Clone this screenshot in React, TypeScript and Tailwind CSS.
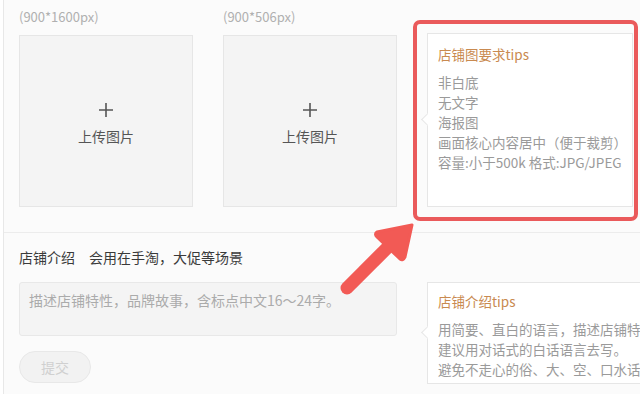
const font = { fontFamily: '"Noto Sans CJK SC", "Noto Sans", sans-serif' };

function UploadBox({ size }: { size: string }) {
  return (
    <div className="flex flex-col w-[174px] shrink-0">
      <div className="h-[18px] text-[13px] leading-[18px] text-[#b0b0b0]">{size}</div>
      <div className="mt-[9px] h-[172px] bg-[#f4f4f4] border border-[#e6e6e6] flex flex-col items-center justify-center">
        <svg width="14" height="14" viewBox="0 0 14 14" className="mt-[6px]">
          <path d="M7 0v14M0 7h14" stroke="#555" strokeWidth="1.6" />
        </svg>
        <div className="mt-[9px] text-[14px] leading-[20px] text-[#555]">上传图片</div>
      </div>
    </div>
  );
}

function Tips({ title, lines, className }: { title: string; lines: string[]; className: string }) {
  return (
    <div className={`relative shrink-0 bg-white border border-[#e6e6e6] pl-[10px] ${className}`}>
      <div className="absolute left-[-5px] w-[9px] h-[9px] bg-white border-l border-b border-[#e6e6e6] rotate-45 top-[calc(50%-5px)]" />
      <div className="text-[13.5px] leading-[20px] text-[#c98a50]">{title}</div>
      <div className="mt-[8px] text-[13.5px] leading-[20px] text-[#9a9a9a] whitespace-nowrap">
        {lines.map((l) => (
          <div key={l}>{l}</div>
        ))}
      </div>
    </div>
  );
}

export default function App() {
  return (
    <div className="relative w-[640px] h-[394px] overflow-hidden bg-white" style={font}>
      <div className="ml-[3px] h-full border-l border-[#e8e8e8] bg-[#fbfbfb]">
        <div className="h-[233px] border-b border-[#ececec] pl-[15px] pt-[8px] flex gap-[30px]">
          <UploadBox size="(900*1600px)" />
          <UploadBox size="(900*506px)" />
          <Tips
            className="mt-[25px] w-[206px] h-[174px] pt-[10px]"
            title="店铺图要求tips"
            lines={["非白底", "无文字", "海报图", "画面核心内容居中（便于裁剪）", "容量:小于500k 格式:JPG/JPEG"]}
          />
        </div>
        <div className="pl-[15px] flex gap-[30px]">
          <div className="flex flex-col w-[378px] shrink-0">
            <div className="mt-[14px] text-[14px] leading-[20px] text-[#3a3a3a] whitespace-nowrap">
              店铺介绍<span className="ml-[14px]">会用在手淘，大促等场景</span>
            </div>
            <div className="mt-[15px] h-[54px] rounded-[3px] bg-[#f4f4f4] border border-[#e8e8e8] px-[9px] pt-[7px] text-[14px] leading-[20px] text-[#ababab] whitespace-nowrap">
              描述店铺特性，品牌故事，含标点中文16～24字。
            </div>
            <button className="mt-[15px] w-[72px] h-[32px] rounded-full bg-[#f2f2f2] border border-[#e8e8e8] text-[14px] text-[#d0d0d0]">
              提交
            </button>
          </div>
          <Tips
            className="mt-[49px] w-[240px] h-[102px] pt-[8px]"
            title="店铺介绍tips"
            lines={["用简要、直白的语言，描述店铺特色。", "建议用对话式的白话语言去写。", "避免不走心的俗、大、空、口水话。"]}
          />
        </div>
      </div>
      <div className="absolute left-[413px] top-[20px] w-[225px] h-[201px] border-[4px] border-[#ea5a5b] rounded-[7px]" />
      <svg className="absolute left-0 top-0" width="640" height="394" viewBox="0 0 640 394">
        <line x1="347" y1="288" x2="392" y2="243" stroke="#f25a55" strokeWidth="13" strokeLinecap="round" />
        <path d="M412 225 L377 232 Q374 234 377 237 L400 259 Q403 261 405 257 Z" fill="#f25a55" stroke="#f25a55" strokeWidth="3" strokeLinejoin="round" />
      </svg>
    </div>
  );
}
